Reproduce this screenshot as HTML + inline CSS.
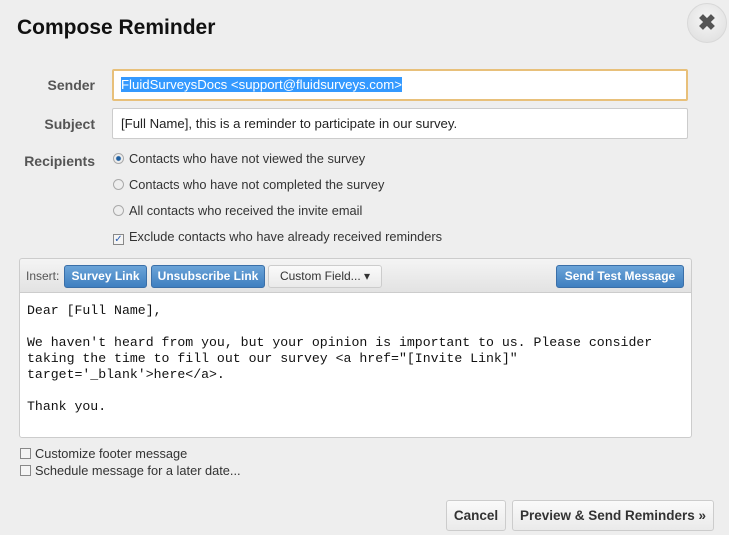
<!DOCTYPE html>
<html><head><style>
*{box-sizing:border-box;margin:0;padding:0}
body{width:729px;height:535px;background:#eee;font-family:"Liberation Sans",sans-serif;position:relative;overflow:hidden;color:#333}
.a{position:absolute}
h1{position:absolute;left:17px;top:16px;font-size:21px;font-weight:bold;color:#111}
.close{left:687px;top:3px;width:40px;height:40px;border-radius:50%;background:radial-gradient(circle at 50% 40%,#f6f6f6,#dcdcdc);border:1px solid #d8d8d8;color:#555;font-size:22px;font-weight:bold;text-align:center;line-height:38px}
.lbl{font-size:14px;font-weight:bold;color:#555;text-align:right;width:80px;left:15px}
.inp{left:112px;width:576px;background:#fff;border:1px solid #ccc;border-radius:2px;font-size:13.2px;padding-left:8px;color:#222}
.opt{left:113px;font-size:12.8px;color:#333}
.rad{display:inline-block;width:11px;height:11px;border-radius:50%;border:1px solid #aaa;background:#eee;vertical-align:-1px;margin-right:5px}
.cb{display:inline-block;width:11px;height:11px;border:1px solid #888;background:#f4f4f4;vertical-align:-1px;margin-right:5px;font-size:10px;line-height:9px;color:#2a5db0;text-align:center}
.btn{top:265px;height:23px;border-radius:3px;background:linear-gradient(#6ba4d8,#3f7fc0);border:1px solid #3a6fa8;color:#fff;font-size:12px;font-weight:bold;text-align:center;line-height:21px}
.gbtn{background:linear-gradient(#fafafa,#eaeaea);border:1px solid #ccc;border-radius:3px;color:#333;font-weight:bold;text-align:center}
</style></head><body>
<h1>Compose Reminder</h1>
<div class="a close">✖</div>
<div class="a lbl" style="top:77px">Sender</div>
<div class="a inp" style="top:69px;height:32px;border:2px solid #e8c07a;line-height:28px;padding-left:7px"><span style="background:#3399ff;color:#fff">FluidSurveysDocs &lt;support@fluidsurveys.com&gt;</span></div>
<div class="a lbl" style="top:116px">Subject</div>
<div class="a inp" style="top:108px;height:31px;line-height:29px">[Full Name], this is a reminder to participate in our survey.</div>
<div class="a lbl" style="top:153px;width:81px;left:14px">Recipients</div>
<div class="a opt" style="top:151px"><span class="rad" style="background:radial-gradient(circle,#1f5fa0 30%,#eee 45%)"></span>Contacts who have not viewed the survey</div>
<div class="a opt" style="top:177px"><span class="rad"></span>Contacts who have not completed the survey</div>
<div class="a opt" style="top:203px"><span class="rad"></span>All contacts who received the invite email</div>
<div class="a opt" style="top:229px"><span class="cb">✓</span>Exclude contacts who have already received reminders</div>
<div class="a" style="left:19px;top:258px;width:673px;height:180px;border:1px solid #ccc;border-radius:3px;background:linear-gradient(#f4f4f4,#e2e2e2 34px,#fff 34px)"></div>
<div class="a" style="left:26px;top:269px;font-size:12px;color:#555">Insert:</div>
<div class="a btn" style="left:64px;width:83px">Survey Link</div>
<div class="a btn" style="left:151px;width:114px">Unsubscribe Link</div>
<div class="a gbtn" style="left:268px;top:265px;width:114px;height:23px;font-size:12px;line-height:21px;font-weight:normal">Custom Field... ▾</div>
<div class="a btn" style="left:556px;width:128px">Send Test Message</div>
<div class="a" style="left:20px;top:292px;width:671px;border-top:1px solid #ccc"></div>
<pre class="a" style="left:27px;top:303px;font-family:'Liberation Mono',monospace;font-size:13.2px;line-height:16px;color:#111">Dear [Full Name],

We haven't heard from you, but your opinion is important to us. Please consider
taking the time to fill out our survey &lt;a href="[Invite Link]"
target='_blank'&gt;here&lt;/a&gt;.

Thank you.</pre>
<div class="a opt" style="left:20px;top:446px;font-size:12.8px"><span class="cb" style="margin-right:4px"></span>Customize footer message</div>
<div class="a opt" style="left:20px;top:463px;font-size:12.8px"><span class="cb" style="margin-right:4px"></span>Schedule message for a later date...</div>
<div class="a gbtn" style="left:446px;top:500px;width:60px;height:31px;line-height:29px;font-size:13.5px">Cancel</div>
<div class="a gbtn" style="left:512px;top:500px;width:202px;height:31px;line-height:29px;font-size:13.5px">Preview &amp; Send Reminders »</div>
</body></html>
